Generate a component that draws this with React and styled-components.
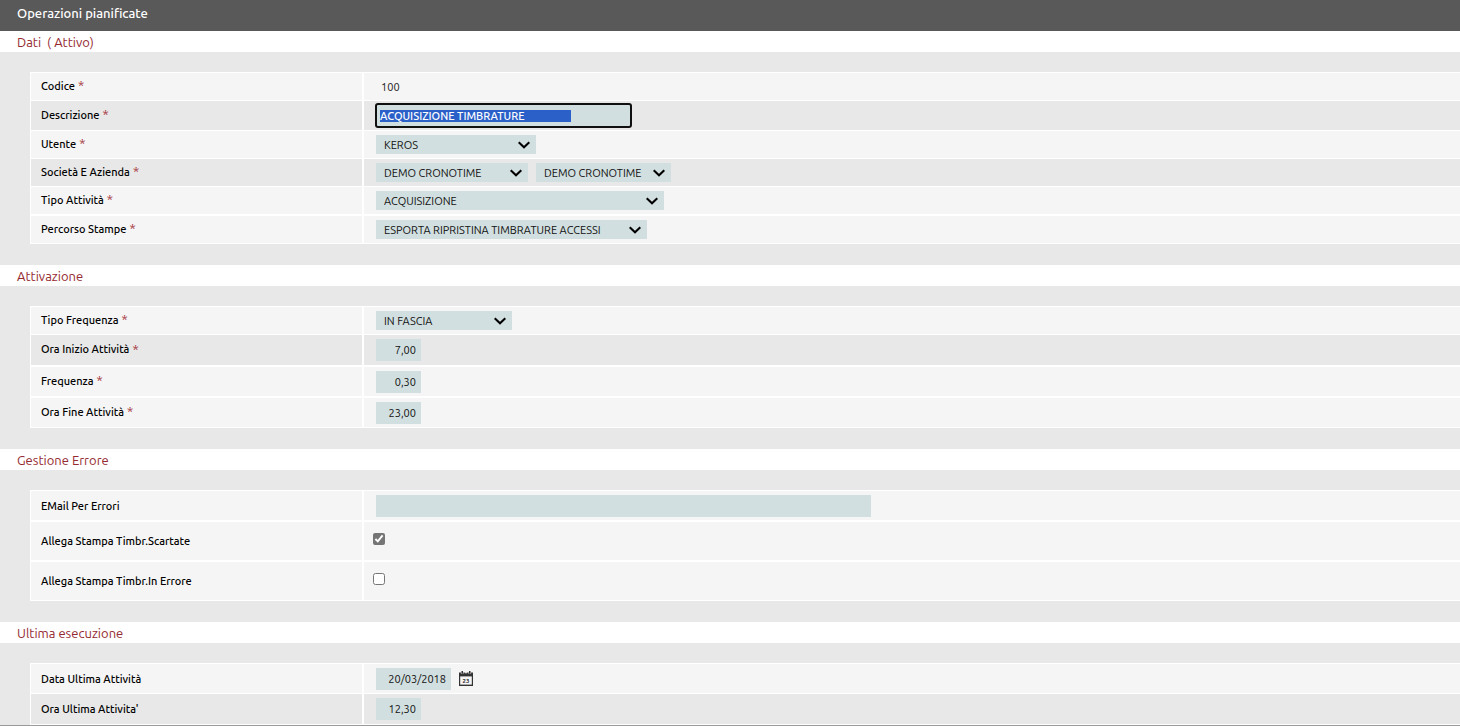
import React, { useEffect, useRef } from 'react'
import styled, { createGlobalStyle } from 'styled-components'

const users = ['KEROS']
const companies = ['DEMO CRONOTIME']
const activities = ['ACQUISIZIONE']
const paths = ['ESPORTA RIPRISTINA TIMBRATURE ACCESSI']
const frequencies = ['IN FASCIA']

const description = 'ACQUISIZIONE TIMBRATURE'.padEnd(41, ' ')

function Row({ id, label, required, children, ...rest }) {
  return (
    <RowStyle {...rest}>
      <LabelCell $required={required}>
        <label htmlFor={id}>{label}</label>
        {required && <Required>*</Required>}
      </LabelCell>
      <ValueCell>{children}</ValueCell>
    </RowStyle>
  )
}

function Select({ id, label, width, options }) {
  return (
    <SelectWrapper $width={width}>
      <SelectBox id={id} aria-label={label}>
        {options.map((option) => (
          <option key={option}>{option}</option>
        ))}
      </SelectBox>
      <Chevron viewBox="0 0 12 8" aria-hidden="true">
        <path d="M0.7 1.2 L6 6.2 L11.3 1.2" fill="none" stroke="#000" strokeWidth="2.1" />
      </Chevron>
    </SelectWrapper>
  )
}

function CalendarIcon() {
  return (
    <svg width="14" height="15" viewBox="0 0 14 15" aria-hidden="true">
      <path d="M0 1.5h14V15H0z" fill="#333" />
      <path d="M1.2 5.4h11.6v8.2H1.2z" fill="#f5f5f5" />
      <path d="M1.9 1.2h2.6v1.6H1.9zM9.5 1.2h2.6v1.6H9.5zM5.8 1.2h2.4v1H5.8z" fill="#f5f5f5" />
      <path d="M2.5 0h1.5v2.8H2.5zM10 0h1.5v2.8H10z" fill="#333" />
      <text x="7" y="11.8" textAnchor="middle" fontSize="6" fontWeight="700" fill="#333">23</text>
    </svg>
  )
}

function App() {
  const descriptionRef = useRef(null)

  useEffect(() => {
    descriptionRef.current.focus()
    descriptionRef.current.select()
  }, [])

  return (
    <Page>
      <GlobalStyle />
      <Title>Operazioni pianificate</Title>

      <Section>
        <h2>Dati&nbsp; ( Attivo)</h2>
        <Fields>
          <Row id="codice" label="Codice" required>
            <Output id="codice">100</Output>
          </Row>
          <Row id="descrizione" label="Descrizione" required $dark $height={30}>
            <DescriptionInput id="descrizione" ref={descriptionRef} defaultValue={description} spellCheck={false} />
          </Row>
          <Row id="utente" label="Utente" required>
            <Select id="utente" width={160} options={users} />
          </Row>
          <Row id="societa" label="Società E Azienda" required $dark>
            <Select id="societa" width={152} options={companies} />
            <Select id="azienda" label="Azienda" width={135} options={companies} />
          </Row>
          <Row id="tipo" label="Tipo Attività" required>
            <Select id="tipo" width={288} options={activities} />
          </Row>
          <Row id="percorso" label="Percorso Stampe" required $thick $height={29}>
            <Select id="percorso" width={271} options={paths} />
          </Row>
        </Fields>
      </Section>

      <Section>
        <h2>Attivazione</h2>
        <Fields>
          <Row id="tipo-frequenza" label="Tipo Frequenza" required>
            <Select id="tipo-frequenza" width={136} options={frequencies} />
          </Row>
          <Row id="ora-inizio" label="Ora Inizio Attività" required $dark $height={31}>
            <NumberInput id="ora-inizio" defaultValue="7,00" />
          </Row>
          <Row id="frequenza" label="Frequenza" required $thick $height={31}>
            <NumberInput id="frequenza" defaultValue="0,30" />
          </Row>
          <Row id="ora-fine" label="Ora Fine Attività" required $thick $height={31}>
            <NumberInput id="ora-fine" defaultValue="23,00" />
          </Row>
        </Fields>
      </Section>

      <Section>
        <h2>Gestione Errore</h2>
        <Fields>
          <Row id="email" label="EMail Per Errori" $height={30}>
            <EmailInput id="email" />
          </Row>
          <Row id="scartate" label="Allega Stampa Timbr.Scartate" $thick $height={40}>
            <Checkbox id="scartate" type="checkbox" defaultChecked />
          </Row>
          <Row id="errore" label="Allega Stampa Timbr.In Errore" $thick $height={40}>
            <Checkbox id="errore" type="checkbox" />
          </Row>
        </Fields>
      </Section>

      <Section>
        <h2>Ultima esecuzione</h2>
        <Fields>
          <Row id="data-ultima" label="Data Ultima Attività" $height={30}>
            <DateInput id="data-ultima" defaultValue="20/03/2018" />
            <IconButton type="button" aria-label="Calendario">
              <CalendarIcon />
            </IconButton>
          </Row>
          <Row id="ora-ultima" label="Ora Ultima Attivita'" $dark $height={31}>
            <NumberInput id="ora-ultima" defaultValue="12,30" />
          </Row>
        </Fields>
      </Section>
    </Page>
  )
}

export default App

const GlobalStyle = createGlobalStyle`
    * {
        box-sizing: border-box;
    }

    body {
        margin: 0;
        background: #e8e8e8;
    }

    body, input, select, button {
        font-family: Ubuntu, 'Noto Sans', sans-serif;
        font-size: 11px;
    }
`

const Page = styled.main`
    display: flex;
    flex-direction: column;
    min-height: 100vh;
    border-bottom: 1px solid #9a9a9a;
`

const Title = styled.h1`
    margin: 0;
    padding: 3px 17px 8px;
    background: #595959;
    color: #fff;
    font-size: 13px;
    font-weight: 500;
    line-height: 20px;
`

const Section = styled.section`
    padding-bottom: 21px;

    &:last-child {
        padding-bottom: 0;
    }

    h2 {
        margin: 0 0 20px;
        padding: 1px 17px 0;
        background: #fff;
        color: #952a31;
        font-size: 13px;
        font-weight: 400;
        line-height: 20px;
    }
`

const Fields = styled.div`
    margin-left: 30px;
    border-left: 1px solid #fff;
    border-bottom: 1px solid #fff;
`

const RowStyle = styled.div`
    display: grid;
    grid-template-columns: 333px 1fr;
    min-height: ${({ $height = 28 }) => $height}px;
    border-top: ${({ $thick }) => ($thick ? 2 : 1)}px solid #fff;
    background: ${({ $dark }) => ($dark ? '#e8e8e8' : '#f5f5f5')};
`

const LabelCell = styled.div`
    display: flex;
    align-items: center;
    gap: 3px;
    padding: 0 0 ${({ $required }) => ($required ? 2 : 0)}px 10px;
    border-right: 2px solid #fff;
    color: #000;
    font-weight: 500;
`

const Required = styled.span`
    color: #a5343b;
    font-size: 13px;
    font-weight: 400;
    line-height: 13px;
`

const ValueCell = styled.div`
    display: flex;
    align-items: center;
    gap: 8px;
    padding-left: 12px;
`

const Output = styled.output`
    padding-left: 5px;
    color: #222;
`

const Input = styled.input`
    height: 22px;
    padding: 0 5px;
    border: 0;
    border-radius: 0;
    background: #d2dfe0;
    color: #111;
`

const DescriptionInput = styled(Input)`
    width: 255px;
    height: 23px;
    padding: 0 4px;
    font-weight: 500;
    text-transform: uppercase;

    &:focus {
        border-radius: 2px;
        outline: 2px solid #101010;
        outline-offset: -1px;
    }

    &::selection {
        background: #2a60c8;
        color: #fff;
    }
`

const NumberInput = styled(Input)`
    width: 45px;
    text-align: right;
`

const DateInput = styled(Input)`
    width: 75px;
    text-align: right;
`

const EmailInput = styled(Input)`
    width: 495px;
`

const Checkbox = styled.input`
    width: 12px;
    height: 12px;
    margin: 0 0 5px -3px;
    accent-color: #757575;
`

const SelectWrapper = styled.div`
    position: relative;
    width: ${({ $width }) => $width}px;
    height: 19px;
`

const SelectBox = styled.select`
    width: 100%;
    height: 100%;
    padding: 0 20px 0 8px;
    border: 0;
    border-radius: 0;
    background: #d2dfe0;
    color: #111;
    appearance: none;
`

const Chevron = styled.svg`
    position: absolute;
    top: 6px;
    right: 6px;
    width: 12px;
    height: 8px;
    pointer-events: none;
`

const IconButton = styled.button`
    display: flex;
    padding: 0;
    border: 0;
    background: none;
    cursor: pointer;
`
